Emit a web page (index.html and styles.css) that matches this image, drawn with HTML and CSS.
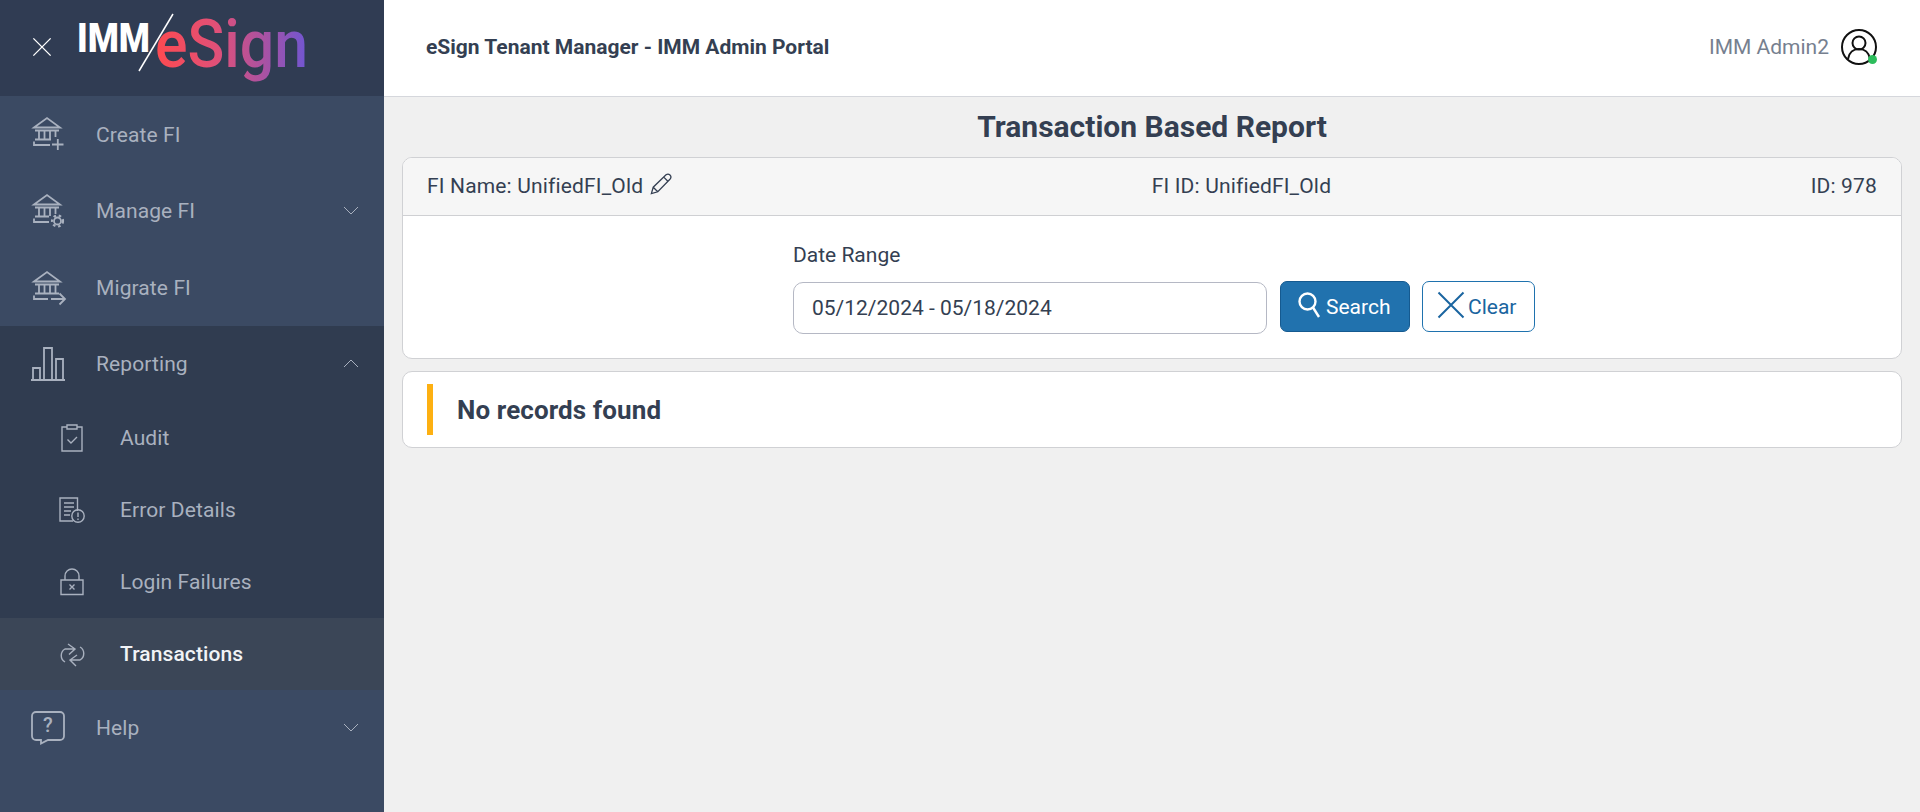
FILE: index.html
```html
<!DOCTYPE html>
<html lang="en">
<head>
<meta charset="utf-8">
<title>Transaction Based Report</title>
<link rel="stylesheet" href="styles.css">
</head>
<body>
<div class="app">
  <aside class="sidebar">
    <div class="brand">
      <svg class="close" viewBox="0 0 22 22"><path d="M1.500 1.500 20.500 20.500M20.500 1.500 1.500 20.500"/></svg>
      <svg class="logo" viewBox="0 0 250 80">
        <defs>
          <linearGradient id="esign" gradientUnits="userSpaceOnUse" x1="86" y1="0" x2="237" y2="0">
            <stop offset="0" stop-color="#fd4a50"/>
            <stop offset=".4" stop-color="#e05078"/>
            <stop offset=".7" stop-color="#ac52a0"/>
            <stop offset="1" stop-color="#7056d2"/>
          </linearGradient>
        </defs>
        <text class="logo-imm" x="7" y="44" textLength="73" lengthAdjust="spacingAndGlyphs">IMM</text>
        <path class="logo-slash" d="M103 6 69 63"/>
        <text class="logo-esign" x="85" y="59" textLength="153" lengthAdjust="spacingAndGlyphs" fill="url(#esign)">eSign</text>
      </svg>
    </div>
    <nav class="nav">
      <a class="item top">
        <svg class="ico" viewBox="0 0 34 34"><path d="M3 10.500 16 1l13 9.500zM4 13.500h24M8 13.500v8.500M13.500 13.500v8.500M19 13.500v8.500M24.500 13.500v6.500M4 22.500h16M3 24.500v3.500h16"/><path d="M21 27.500h11.500M26.800 22v11"/></svg>
        <span>Create FI</span>
      </a>
      <a class="item top">
        <svg class="ico" viewBox="0 0 34 34"><path d="M3 10.500 16 1l13 9.500zM4 13.500h24M8 13.500v8.500M13.500 13.500v8.500M19 13.500v8.500M24.500 13.500v6.500M4 22.500h14M3 24.500v3.500h15"/><circle cx="26.500" cy="27" r="3.500"/><circle cx="26.500" cy="27" r="5.500" stroke-dasharray="2.500 2.800" stroke-width="2.200"/></svg>
        <span>Manage FI</span>
        <svg class="chev" viewBox="0 0 16 9"><path d="M1 1l7 7 7-7"/></svg>
      </a>
      <a class="item top">
        <svg class="ico" viewBox="0 0 34 34"><path d="M3 10.500 16 1l13 9.500zM4 13.500h24M8 13.500v8.500M13.500 13.500v8.500M19 13.500v8.500M24.500 13.500v8.500M4 22.500h24M3 24.500v3.500h14"/><path d="M20 28h14M28.500 22.500 34 28l-5.500 5.500"/></svg>
        <span>Migrate FI</span>
      </a>
      <div class="group">
        <a class="item">
          <svg class="ico" viewBox="0 0 34 34"><path d="M0 33h34M2 33V21h7v12M13 33V1h8v32M25 33V12h7v21"/></svg>
          <span>Reporting</span>
          <svg class="chev" viewBox="0 0 16 9"><path d="M1 8l7-7 7 7"/></svg>
        </a>
        <a class="sub">
          <svg class="sico" viewBox="0 0 26 28"><path d="M8 3H3v24h20V3h-5M8 1h10v4H8zM8.500 15.500l3.500 3.500 6-6"/></svg>
          <span>Audit</span>
        </a>
        <a class="sub">
          <svg class="sico" viewBox="0 0 26 28"><path d="M14 25H1V2h17.500v13M5 7h10M5 11h10M5 15h7M5 19h6"/><circle cx="19" cy="20" r="6.200"/><path d="M19 16.500v4.500M19 22.500v1.500"/></svg>
          <span>Error Details</span>
        </a>
        <a class="sub">
          <svg class="sico" viewBox="0 0 26 28"><path d="M2 12h22v14.500H2zM6 12V8a7 7 0 0 1 14 0v4M10.500 16.500l5 5M15.500 16.500l-5 5"/></svg>
          <span>Login Failures</span>
        </a>
        <a class="sub active">
          <svg class="sico" viewBox="0 0 26 28"><path d="M6 22A7.500 7.500 0 0 1 6 9H16M9 4l7 5-6 5.500M21 7A7.500 7.500 0 0 1 21 20H11M18 15l-7 5 6 6"/></svg>
          <span>Transactions</span>
        </a>
      </div>
      <a class="item">
        <svg class="ico help" viewBox="0 0 34 34"><path d="M5 1h24a4 4 0 0 1 4 4v20a4 4 0 0 1-4 4H17l-7 3.500V29H5a4 4 0 0 1-4-4V5a4 4 0 0 1 4-4z"/><text x="17" y="21" text-anchor="middle" class="q">?</text></svg>
        <span>Help</span>
        <svg class="chev" viewBox="0 0 16 9"><path d="M1 1l7 7 7-7"/></svg>
      </a>
    </nav>
  </aside>
  <main class="main">
    <header class="topbar">
      <div class="portal">eSign Tenant Manager - IMM Admin Portal</div>
      <div class="user">
        <span class="uname">IMM Admin2</span>
        <span class="avatar">
          <svg viewBox="0 0 36 36"><circle cx="18" cy="18" r="17"/><circle cx="18" cy="14" r="6.500"/><path d="M7 30c1-6.500 5.500-10 11-10s10 3.500 11 10"/></svg>
          <i class="dot"></i>
        </span>
      </div>
    </header>
    <div class="content">
      <h1 class="title">Transaction Based Report</h1>
      <section class="card">
        <div class="card-head">
          <div class="head-a">FI Name: UnifiedFI_Old
            <svg class="pencil" viewBox="0 0 24 24"><path d="M1.500 22.500l2-7L17.500 2a3.200 3.200 0 0 1 4.500 4.500L8.500 20.500zM3.500 15.500l5 5M15 4.500l4.500 4.500"/></svg>
          </div>
          <div>FI ID: UnifiedFI_Old</div>
          <div>ID: 978</div>
        </div>
        <div class="card-body">
          <div class="field">
            <label class="label">Date Range</label>
            <div class="date">05/12/2024 - 05/18/2024</div>
          </div>
          <button class="btn btn-primary" type="button">
            <svg class="btn-ico" viewBox="0 0 22 26"><circle cx="9.500" cy="9.500" r="8"/><path d="M15 15.500 21 25"/></svg>Search
          </button>
          <button class="btn btn-outline" type="button">
            <svg class="btn-ico" viewBox="0 0 26 26"><path d="M.5.500l25 25M25.500.500l-25 25"/></svg>Clear
          </button>
        </div>
      </section>
      <section class="notice">
        <span class="bar"></span>
        <strong>No records found</strong>
      </section>
    </div>
  </main>
</div>
</body>
</html>
```
FILE: styles.css
```css
* { box-sizing: border-box; }
html, body { margin: 0; height: 100%; }
body { font-family: Roboto, "Liberation Sans", sans-serif; color: #343f52; overflow: hidden; }
.app { display: flex; height: 812px; }

.sidebar { width: 384px; flex: none; background: #3b4a63; display: flex; flex-direction: column; }
.brand { height: 96px; background: #303c53; display: flex; align-items: center; padding-left: 32px; }
.close { width: 20px; height: 20px; fill: none; stroke: #fff; stroke-width: 1.500; flex: none; margin-top: -2px; margin-right: 18px; }
.logo { width: 250px; height: 80px; flex: none; overflow: visible; }
.logo-imm { font-family: Roboto, sans-serif; font-weight: 900; font-size: 40px; fill: #fff; }
.logo-slash { fill: none; stroke: #fff; stroke-width: 1.500; }
.logo-esign { font-family: Roboto, sans-serif; font-weight: 500; font-size: 66px; }

.nav { display: flex; flex-direction: column; }
.item { height: 76px; display: flex; align-items: center; padding-left: 31px; padding-right: 25px; color: #a9b1bf; font-size: 21px; letter-spacing: .1px; }
.item.top { height: 76.67px; }
.item span { flex: 1; padding-top: 1px; }
.ico { width: 34px; height: 34px; margin-right: 31px; fill: none; stroke: #a9b1bf; stroke-width: 1.800; flex: none; overflow: visible; }
.chev { width: 16px; height: 9px; fill: none; stroke: #a9b1bf; stroke-width: 1; flex: none; }
.q { font: 500 20px Roboto, sans-serif; fill: #a9b1bf; stroke: none; }
.group { background: #303c50; }
.sub { height: 72px; display: flex; align-items: center; padding-left: 59px; color: #a9b1bf; font-size: 21px; letter-spacing: .1px; }
.sico { width: 26px; height: 28px; margin-right: 35px; fill: none; stroke: #a9b1bf; stroke-width: 1.400; flex: none; overflow: visible; }
.sub.active { background: #3b4657; color: #f1f3f6; font-weight: 500; }

.main { flex: 1; min-width: 0; background: #f0f0f0; display: flex; flex-direction: column; }
.topbar { height: 97px; background: #fff; border-bottom: 1px solid #d5d7dc; display: flex; align-items: center; justify-content: space-between; padding: 0 43px 2px 42px; }
.portal { font-size: 21px; font-weight: 700; color: #343f52; }
.user { display: flex; align-items: center; gap: 12px; }
.uname { font-size: 21px; color: #76808f; }
.avatar { position: relative; width: 36px; height: 36px; display: block; }
.avatar svg { width: 36px; height: 36px; fill: none; stroke: #111; stroke-width: 2; display: block; }
.dot { position: absolute; right: 0; bottom: 1px; width: 9px; height: 9px; border-radius: 50%; background: #2dbd5c; }

.content { padding: 0 18px; }
.title { margin: 12px 0 12px; text-align: center; font-size: 30px; line-height: 36px; font-weight: 700; color: #343f52; }
.card { background: #fff; border: 1px solid #d0d1d4; border-radius: 10px; overflow: hidden; }
.card-head { height: 58px; background: #f6f6f6; border-bottom: 1px solid #cfd0d3; display: flex; justify-content: space-between; align-items: center; padding: 0 24px 2px; font-size: 21px; letter-spacing: .16px; }
.head-a { display: flex; align-items: center; gap: 7px; }
.pencil { width: 22px; height: 22px; fill: none; stroke: #343f52; stroke-width: 1.400; margin-top: -4px; }
.card-body { height: 142px; display: flex; align-items: flex-end; padding: 0 0 24px 390px; }
.field { width: 474px; margin-right: 13px; }
.label { display: block; font-size: 21px; line-height: 24px; margin-bottom: 15px; }
.date { height: 52px; border: 1px solid #b5b8c4; border-radius: 10px; display: flex; align-items: center; padding-left: 18px; font-size: 21px; }
.btn { height: 51px; border-radius: 7px; font-family: Roboto, sans-serif; font-size: 21px; display: flex; align-items: center; margin-bottom: 2px; }
.btn-ico { fill: none; stroke: currentColor; flex: none; overflow: visible; }
.btn-primary { width: 130px; background: #2172ae; border: 1px solid #155a90; color: #fff; padding: 0 0 0 17px; margin-right: 12px; }
.btn-primary .btn-ico { width: 22px; height: 26px; stroke-width: 2.400; margin-right: 6px; margin-top: -4px; }
.btn-outline { width: 113px; background: #fff; border: 1px solid #1f72ae; color: #1a65a0; padding: 0 0 0 15px; }
.btn-outline .btn-ico { width: 26px; height: 26px; stroke-width: 2; margin-right: 4px; margin-top: -3px; }
.notice { margin-top: 12px; height: 77px; background: #fff; border: 1px solid #d0d1d4; border-radius: 10px; display: flex; align-items: center; padding-left: 24px; }
.bar { width: 6px; height: 51px; background: #fdb012; margin-right: 24px; }
.notice strong { font-size: 26px; font-weight: 700; letter-spacing: .1px; color: #343f52; }
```
